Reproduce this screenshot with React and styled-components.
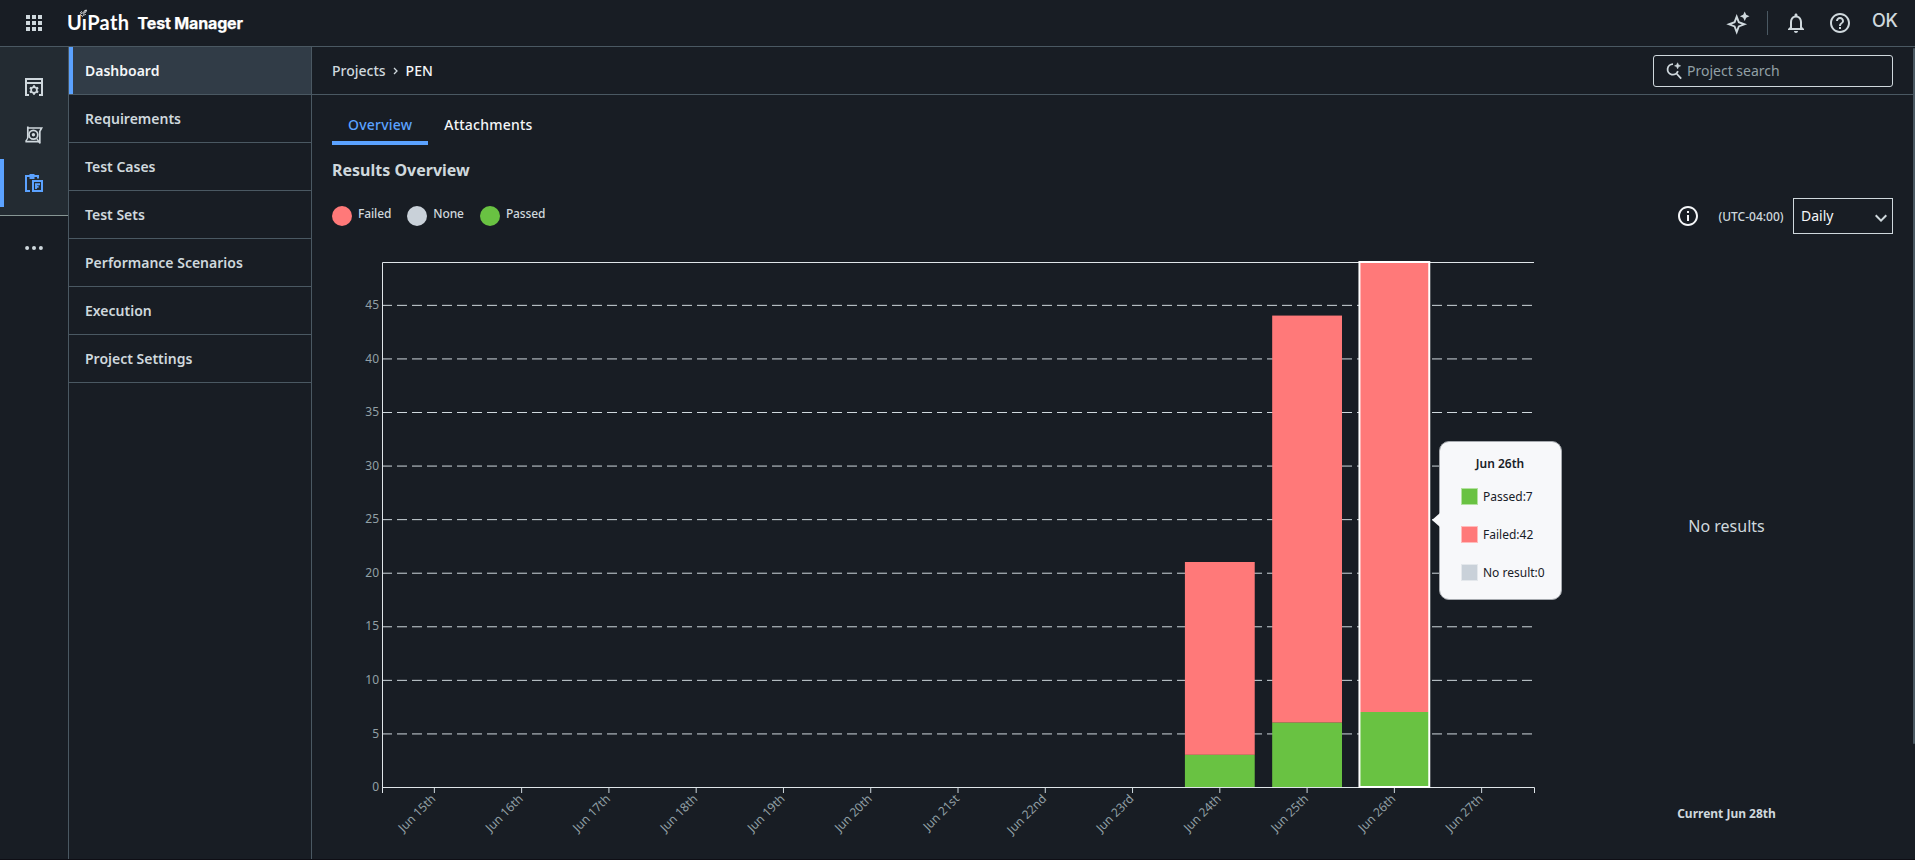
import React from "react";
import styled, { createGlobalStyle } from "styled-components";
import {
  MdApps,
  MdExpandMore,
  MdHelpOutline,
  MdInfoOutline,
  MdNotificationsNone,
} from "react-icons/md";

const colors = {
  bg: "#181d24",
  rail: "#232b32",
  active: "#313c47",
  line: "#4a5862",
  text: "#cfd8dd",
  bright: "#f4f6f8",
  muted: "#92a0a6",
  blue: "#5ba2ff",
  failed: "#ff7979",
  passed: "#69c242",
  none: "#c9d1d9",
};

const GlobalStyle = createGlobalStyle`
  * {
    box-sizing: border-box;
  }
  body {
    margin: 0;
    background: ${colors.bg};
    color: ${colors.text};
    font-family: "Noto Sans", sans-serif;
    font-size: 14px;
    overflow: hidden;
  }
`;

const Page = styled.div`
  display: flex;
  flex-direction: column;
  height: 860px;
  border-bottom: 1px solid #0e0e15;
`;

const Header = styled.header`
  display: flex;
  flex: none;
  align-items: center;
  justify-content: space-between;
  height: 47px;
  padding: 0 16px 0 22px;
  border-bottom: 1px solid ${colors.line};
`;

const HeaderSide = styled.div`
  display: flex;
  align-items: center;
  height: 46px;
`;

const Logo = styled.svg`
  display: block;
  margin-left: 21px;
`;

const Divider = styled.div`
  width: 1px;
  height: 24px;
  margin: 0 16px 0 17px;
  background: ${colors.line};
`;

const HeaderIcon = styled.div`
  display: flex;
  margin-right: 20px;
`;

const User = styled.div`
  width: 27px;
  margin-bottom: 5px;
  font-family: Inter, sans-serif;
  font-size: 18px;
  font-weight: 500;
  line-height: 22px;
  letter-spacing: -0.3px;
`;

const Body = styled.div`
  display: flex;
  flex: 1;
  min-height: 0;
`;

const Rail = styled.nav`
  width: 69px;
  border-right: 1px solid ${colors.line};
`;

const RailGroup = styled.div`
  height: 169px;
  padding-top: 16px;
  background: ${colors.rail};
  border-bottom: 1px solid #879694;
`;

const RailItem = styled.div`
  display: flex;
  align-items: center;
  height: 48px;
  padding-left: 21px;
  color: ${(p) => (p.$active ? colors.blue : colors.text)};
  border-left: 4px solid ${(p) => (p.$active ? colors.blue : "transparent")};
`;

const RailMore = styled.div`
  display: flex;
  justify-content: center;
  padding: 30px 0 0;
`;

const SideNav = styled.nav`
  width: 243px;
  border-right: 1px solid ${colors.line};
`;

const NavRow = styled.div`
  border-bottom: 1px solid ${colors.line};
`;

const NavItem = styled.div`
  height: 47px;
  padding-left: 12px;
  border-left: 4px solid ${(p) => (p.$active ? colors.blue : "transparent")};
  background: ${(p) => (p.$active ? colors.active : "transparent")};
  color: ${(p) => (p.$active ? colors.bright : colors.text)};
  font-weight: 600;
  line-height: 47px;
`;

const Main = styled.main`
  flex: 1;
  min-width: 0;
`;

const TopBar = styled.div`
  display: flex;
  align-items: center;
  justify-content: space-between;
  height: 48px;
  padding: 0 20px;
  border-bottom: 1px solid ${colors.line};
`;

const Crumbs = styled.div`
  display: flex;
  align-items: center;
  font-weight: 500;
  line-height: 20px;

  svg {
    margin: 0 8px 0 7px;
  }
`;

const Current = styled.span`
  color: ${colors.bright};
`;

const Search = styled.div`
  display: flex;
  align-items: center;
  gap: 4px;
  width: 240px;
  height: 32px;
  padding-left: 11px;
  border: 1px solid ${colors.text};
  border-radius: 3px;
  color: ${colors.muted};
`;

const ScrollThumb = styled.div`
  width: 2px;
  height: 696px;
  margin-top: 1px;
  border-radius: 2px;
  background: ${colors.line};
`;

const Content = styled.div`
  padding: 2px 20px 0;
`;

const Tabs = styled.div`
  display: flex;
`;

const Tab = styled.div`
  height: 48px;
  padding: 0 16px;
  border-bottom: 4px solid ${(p) => (p.$active ? colors.blue : "transparent")};
  color: ${(p) => (p.$active ? colors.blue : colors.bright)};
  font-weight: 500;
  letter-spacing: 0.22px;
  line-height: 55px;
`;

const Title = styled.h2`
  margin: 13px 0 0;
  font-size: 16px;
  font-weight: 700;
  line-height: 24px;
`;

const Controls = styled.div`
  display: flex;
  align-items: center;
  justify-content: space-between;
  height: 36px;
  margin-top: 16px;
`;

const Legend = styled.div`
  display: flex;
  gap: 16px;
`;

const LegendItem = styled.div`
  display: flex;
  align-items: center;
  gap: 6px;
  font-size: 12px;
  font-weight: 500;
  letter-spacing: -0.12px;
  line-height: 16px;

  span {
    margin-bottom: 4px;
  }
`;

const Dot = styled.i`
  width: 20px;
  height: 20px;
  border-radius: 50%;
  background: ${(p) => p.$color};
`;

const Filters = styled.div`
  display: flex;
  align-items: center;
  color: ${colors.bright};
`;

const Zone = styled.span`
  margin: 0 9.5px 0 18.5px;
  color: ${colors.text};
  font-size: 12px;
  font-weight: 500;
`;

const Select = styled.div`
  display: flex;
  align-items: center;
  justify-content: space-between;
  width: 100px;
  height: 36px;
  padding: 0 0 1px 7px;
  border: 1px solid ${colors.text};

  svg {
    margin: 4px -1px 0 0;
    color: ${colors.text};
  }
`;

const Results = styled.div`
  display: flex;
`;

const ChartBox = styled.div`
  position: relative;
  width: 1260px;
  height: 600px;
`;

const Chart = styled.svg`
  display: block;
  overflow: visible;

  text {
    fill: ${colors.muted};
    font-family: "Noto Sans", sans-serif;
    font-size: 12px;
    text-anchor: end;
  }
`;

const Tooltip = styled.div`
  position: absolute;
  left: 1107px;
  top: 207px;
  width: 123px;
  height: 159px;
  padding: 14px 0 0 21px;
  border: 1px solid #a5a9ae;
  border-radius: 10px;
  background: #f7f8fa;
  color: #182027;
  font-size: 12px;

  &::before {
    content: "";
    position: absolute;
    left: -8px;
    top: 71px;
    border: solid transparent;
    border-width: 7px 8px 7px 0;
    border-right-color: #f7f8fa;
  }
`;

const TooltipTitle = styled.div`
  margin: 0 22px 16px 0;
  font-weight: 600;
  line-height: 16px;
  text-align: center;
`;

const TooltipRow = styled.div`
  display: flex;
  align-items: center;
  gap: 5px;
  height: 17px;
  margin-bottom: 21px;
  white-space: nowrap;
`;

const Swatch = styled.i`
  width: 17px;
  height: 17px;
  border: 1px solid rgba(255, 255, 255, 0.5);
  background: ${(p) => p.$color};
`;

const Today = styled.div`
  display: flex;
  flex-direction: column;
  align-items: center;
  width: 269px;
  padding-top: 280px;
`;

const NoResults = styled.div`
  font-size: 16px;
  line-height: 24px;
`;

const TodayLabel = styled.div`
  margin-top: 267px;
  font-size: 12px;
  font-weight: 700;
  line-height: 18px;
`;

const NAV = [
  "Dashboard",
  "Requirements",
  "Test Cases",
  "Test Sets",
  "Performance Scenarios",
  "Execution",
  "Project Settings",
];

const LEGEND = [
  ["Failed", colors.failed],
  ["None", colors.none],
  ["Passed", colors.passed],
];

const DAYS = [
  { label: "Jun 15th" },
  { label: "Jun 16th" },
  { label: "Jun 17th" },
  { label: "Jun 18th" },
  { label: "Jun 19th" },
  { label: "Jun 20th" },
  { label: "Jun 21st" },
  { label: "Jun 22nd" },
  { label: "Jun 23rd" },
  { label: "Jun 24th", passed: 3, failed: 18 },
  { label: "Jun 25th", passed: 6, failed: 38 },
  { label: "Jun 26th", passed: 7, failed: 42, selected: true },
  { label: "Jun 27th" },
];

const PLOT = { left: 50, top: 28, width: 1152, height: 525, max: 49 };

function UiPathLogo() {
  return (
    <Logo width="180" height="40" viewBox="0 0 180 40" fill="#fff">
      <text x="0" y="26.5" fontFamily="Lato" fontSize="20" fontWeight="700" textLength="62">
        UıPath
      </text>
      <g fill="none" stroke="#fff" strokeWidth="0.9">
        <path d="M15.2 9.6l1.9 1.9-1.9 1.9-1.9-1.9z" />
        <path d="M16.6 9.8l.8-2 2-.8-.6 2.1-1.8 1.1M13.2 9.9l1.6-1.5M17.6 12.3l1-1.2" />
      </g>
      <text
        x="70.5"
        y="26"
        fontFamily="Inter"
        fontSize="16"
        fontWeight="700"
        textLength="105.5"
        stroke="#fff"
        strokeWidth="0.25"
      >
        Test Manager
      </text>
    </Logo>
  );
}

function Sparkle() {
  return (
    <svg width="24" height="24" viewBox="0 0 24 24" fill="none">
      <path
        d="M10.7 5.6l2.1 5.6 5.6 2.1-5.6 2.1-2.1 5.6-2.1-5.6-5.6-2.1 5.6-2.1z"
        stroke="currentColor"
        strokeWidth="1.9"
      />
      <path
        d="M18.7.4l1.5 3.3 3.3 1.5-3.3 1.5-1.5 3.3-1.5-3.3-3.3-1.5 3.3-1.5z"
        fill="currentColor"
      />
    </svg>
  );
}

function SearchIcon() {
  return (
    <svg width="18" height="18" viewBox="0 0 18 18" fill="none" stroke={colors.text} strokeWidth="1.8">
      <path d="M8 2.1a5.3 5.3 0 1 0 4.9 7M11 11l5.2 5.6" />
      <path
        d="M12.6.8l.9 2.1 2.1.9-2.1.9-.9 2.1-.9-2.1-2.1-.9 2.1-.9z"
        fill={colors.text}
        strokeWidth=".6"
      />
    </svg>
  );
}

function ConfigIcon() {
  return (
    <svg width="18" height="18" viewBox="0 0 18 18" fill="none" stroke="currentColor" strokeWidth="2">
      <path d="M4 17H1V1h16v16h-3M1 5h16" />
      <circle cx="9" cy="12" r="2.9" strokeWidth="1.7" />
      <path
        d="M9 7.2v2M9 14.8v2M4.8 9.6l1.8 1M11.4 13.4l1.8 1M4.8 14.4l1.8-1M11.4 10.6l1.8-1"
        strokeWidth="2"
      />
    </svg>
  );
}

function ProcessIcon() {
  return (
    <svg width="18" height="18" viewBox="0 0 18 18" fill="none" stroke="currentColor" strokeWidth="1.7">
      <path d="M2.8 12V.6M3 2h13.6l-1.8 3.4v12M.4 15.6h14.2" />
      <circle cx="8.4" cy="8.8" r="4.4" />
      <circle cx="8.4" cy="8.8" r="1.7" fill="currentColor" stroke="none" />
      <path d="M2.8 12L.8 15.4M14.8 17l-3-4.4" strokeWidth="1.4" />
    </svg>
  );
}

function TestsIcon() {
  return (
    <svg width="18" height="18" viewBox="0 0 18 18" fill="none" stroke="currentColor" strokeWidth="2">
      <path d="M5 17H1V2h12v2.5" />
      <path d="M4.5 0h5v5h-5z" fill="currentColor" stroke="none" />
      <path d="M8 7h9v10H8z" />
      <path d="M10 10.2h5M11 10v5M11 12.8h2.6" strokeWidth="1.9" />
    </svg>
  );
}

function BarChart() {
  const base = PLOT.top + PLOT.height;
  const unit = PLOT.height / PLOT.max;
  const step = PLOT.width / (DAYS.length + 0.2);
  const band = step * 0.8;
  const right = PLOT.left + PLOT.width;
  const ticks = [0, 5, 10, 15, 20, 25, 30, 35, 40, 45];

  return (
    <Chart width="1260" height="600">
      {ticks.map((t) => {
        const y = base + 0.5 - t * unit;
        return (
          <g key={t}>
            {t > 0 && (
              <line x1={PLOT.left} x2={right} y1={y} y2={y} stroke={colors.text} strokeDasharray="10 5" />
            )}
            <text x="47" y={y + 3.7}>
              {t}
            </text>
          </g>
        );
      })}
      <path
        d={`M${right} ${PLOT.top + 0.5}H${PLOT.left + 0.5}V${base + 6}M${PLOT.left} ${base + 0.5}H${right + 0.5}V${base + 6}`}
        fill="none"
        stroke="#dfe5e9"
      />
      {DAYS.map((day, i) => {
        const x = PLOT.left + step * (i + 0.2);
        const mid = x + band / 2;
        const passed = (day.passed || 0) * unit;
        const failed = (day.failed || 0) * unit;
        return (
          <g key={day.label}>
            <rect x={x} y={base - passed - failed} width={band} height={failed} fill={colors.failed} />
            <rect x={x} y={base - passed} width={band} height={passed} fill={colors.passed} />
            {day.selected && (
              <rect
                x={x}
                y={base - passed - failed}
                width={band}
                height={passed + failed}
                fill="none"
                stroke="#fff"
                strokeWidth="2"
              />
            )}
            <line x1={mid} x2={mid} y1={base + 1} y2={base + 6} stroke={colors.text} />
            <text transform={`translate(${mid + 2} ${base + 12.5}) rotate(-45)`}>{day.label}</text>
          </g>
        );
      })}
    </Chart>
  );
}

export default function App() {
  return (
    <Page>
      <GlobalStyle />
      <Header>
        <HeaderSide>
          <MdApps size={24} />
          <UiPathLogo />
        </HeaderSide>
        <HeaderSide>
          <Sparkle />
          <Divider />
          <HeaderIcon>
            <MdNotificationsNone size={24} />
          </HeaderIcon>
          <HeaderIcon>
            <MdHelpOutline size={24} />
          </HeaderIcon>
          <User>OK</User>
        </HeaderSide>
      </Header>
      <Body>
        <Rail>
          <RailGroup>
            <RailItem>
              <ConfigIcon />
            </RailItem>
            <RailItem>
              <ProcessIcon />
            </RailItem>
            <RailItem $active>
              <TestsIcon />
            </RailItem>
          </RailGroup>
          <RailMore>
            <svg width="18" height="4" fill={colors.text}>
              <circle cx="2.1" cy="2" r="2" />
              <circle cx="9" cy="2" r="2" />
              <circle cx="15.9" cy="2" r="2" />
            </svg>
          </RailMore>
        </Rail>
        <SideNav>
          {NAV.map((name, i) => (
            <NavRow key={name}>
              <NavItem $active={i === 0}>{name}</NavItem>
            </NavRow>
          ))}
        </SideNav>
        <Main>
          <TopBar>
            <Crumbs>
              Projects
              <svg width="5" height="8" fill="none" stroke={colors.text} strokeWidth="1.3">
                <path d="M1 1l3 3-3 3" />
              </svg>
              <Current>PEN</Current>
            </Crumbs>
            <Search>
              <SearchIcon />
              Project search
            </Search>
          </TopBar>
          <Content>
            <Tabs>
              <Tab $active>Overview</Tab>
              <Tab>Attachments</Tab>
            </Tabs>
            <Title>Results Overview</Title>
            <Controls>
              <Legend>
                {LEGEND.map(([name, color]) => (
                  <LegendItem key={name}>
                    <Dot $color={color} />
                    <span>{name}</span>
                  </LegendItem>
                ))}
              </Legend>
              <Filters>
                <MdInfoOutline size={24} />
                <Zone>(UTC-04:00)</Zone>
                <Select>
                  Daily
                  <MdExpandMore size={24} />
                </Select>
              </Filters>
            </Controls>
            <Results>
              <ChartBox>
                <BarChart />
                <Tooltip>
                  <TooltipTitle>Jun 26th</TooltipTitle>
                  <TooltipRow>
                    <Swatch $color={colors.passed} />
                    Passed:7
                  </TooltipRow>
                  <TooltipRow>
                    <Swatch $color={colors.failed} />
                    Failed:42
                  </TooltipRow>
                  <TooltipRow>
                    <Swatch $color={colors.none} />
                    No result:0
                  </TooltipRow>
                </Tooltip>
              </ChartBox>
              <Today>
                <NoResults>No results</NoResults>
                <TodayLabel>Current Jun 28th</TodayLabel>
              </Today>
            </Results>
          </Content>
        </Main>
        <ScrollThumb />
      </Body>
    </Page>
  );
}
